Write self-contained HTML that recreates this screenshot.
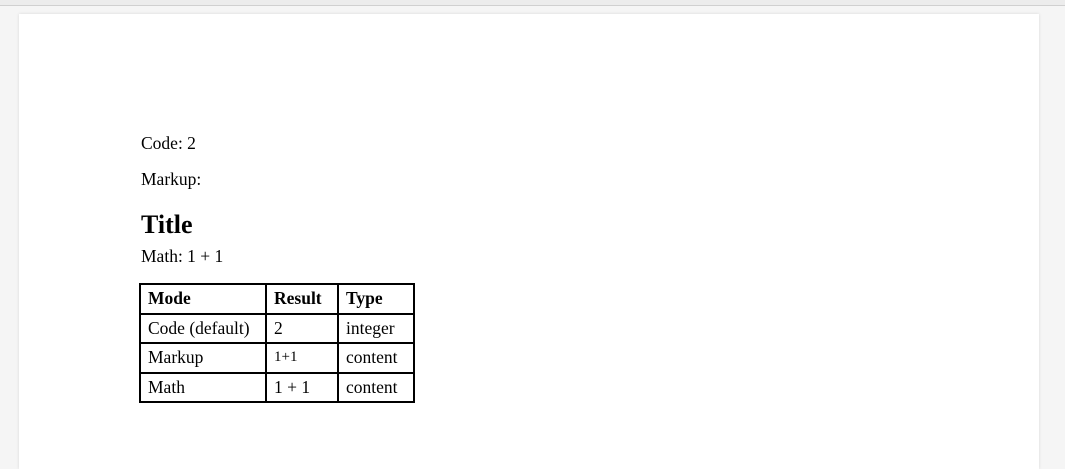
<!DOCTYPE html>
<html><head><style>
html,body{margin:0;height:469px;overflow:hidden}
body{width:1065px;background:#f5f5f5;position:relative;font-family:"Liberation Serif",serif;color:#000}
.top{position:absolute;left:0;top:0;width:1065px;height:5px;background:#ececec;border-bottom:1px solid #d0d0d0}
.page{position:absolute;left:19px;top:14px;width:1020px;height:455px;background:#fff;box-shadow:0 0 3px rgba(0,0,0,.12)}
.t{position:absolute;left:141px;font-size:17.5px;white-space:nowrap}
table{position:absolute;left:139px;top:283px;border-collapse:collapse;font-size:17.5px;table-layout:fixed;width:274px}
td,th{border:2px solid #000;height:27.5px;padding:0 0 0 7px;line-height:27px;white-space:nowrap;text-align:left;overflow:hidden}
th{font-weight:bold}
</style></head><body>
<div class="top"></div>
<div class="page"></div>
<div class="t" style="top:133px">Code: 2</div>
<div class="t" style="top:169px">Markup:</div>
<div class="t" style="top:210px;font-size:26px;font-weight:bold">Title</div>
<div class="t" style="top:246px">Math: 1 + 1</div>
<table>
<col style="width:126px"><col style="width:72px"><col style="width:76px">
<tr><th>Mode</th><th>Result</th><th>Type</th></tr>
<tr><td>Code (default)</td><td>2</td><td>integer</td></tr>
<tr><td>Markup</td><td style="font-size:15px">1+1</td><td>content</td></tr>
<tr><td>Math</td><td>1 + 1</td><td>content</td></tr>
</table>
</body></html>
